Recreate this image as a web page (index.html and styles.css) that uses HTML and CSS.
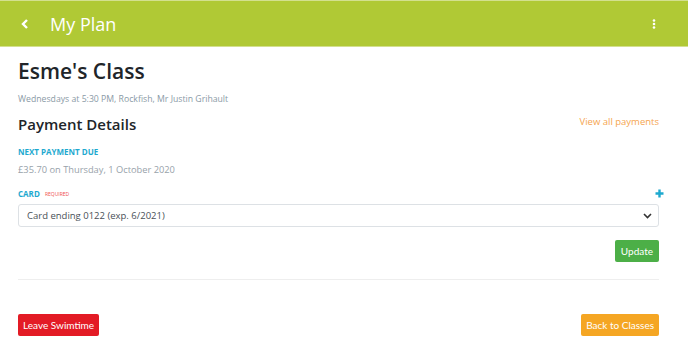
FILE: index.html
```html
<!DOCTYPE html>
<html lang="en">

<head>
    <meta charset="UTF-8">
    <title>My Plan</title>
    <meta name="viewport" content="width=device-width, initial-scale=1.0">
    <link rel="stylesheet" href="styles.css">
</head>

<body>
    <div class="topbar">
        <button class="back-btn" aria-label="Back">
            <svg width="8" height="10" viewBox="0 0 8 10"><path d="M6 1 L2 5 L6 9" fill="none" stroke="#fff" stroke-width="2.4"/></svg>
        </button>
        <span class="topbar-title">My Plan</span>
        <button class="menu-btn" aria-label="Menu">
            <svg width="4" height="10" viewBox="0 0 4 10"><circle cx="2" cy="1.5" r="1.3" fill="#fff"/><circle cx="2" cy="5" r="1.3" fill="#fff"/><circle cx="2" cy="8.5" r="1.3" fill="#fff"/></svg>
        </button>
    </div>

    <div class="content">
        <h1>Esme's Class</h1>
        <p class="class-info">Wednesdays at 5:30 PM, Rockfish, Mr Justin Grihault</p>

        <div class="section-head">
            <h2>Payment Details</h2>
            <a class="link" href="#">View all payments</a>
        </div>

        <div class="label">Next payment due</div>
        <p class="value">£35.70 on Thursday, 1 October 2020</p>

        <div class="card-row">
            <div class="label">Card <span class="required">Required</span></div>
            <svg class="plus" width="9" height="9" viewBox="0 0 9 9"><path d="M4.5 0.5 V8.5 M0.5 4.5 H8.5" stroke="#1ea9cf" stroke-width="2.4"/></svg>
        </div>
        <div class="select">
            <span>Card ending 0122 (exp. 6/2021)</span>
            <svg width="9" height="6" viewBox="0 0 9 6"><path d="M1 1 L4.5 4.5 L8 1" fill="none" stroke="#333" stroke-width="1.6"/></svg>
        </div>

        <div class="update-row">
            <button class="btn btn-green">Update</button>
        </div>

        <hr>

        <div class="actions">
            <button class="btn btn-red">Leave Swimtime</button>
            <button class="btn btn-orange">Back to Classes</button>
        </div>
    </div>
</body>

</html>
```

FILE: styles.css
```css
body {
    margin: 0;
    font-family: "Open Sans", sans-serif;
    background: #fff;
    color: #212529;
}

.topbar {
    display: flex;
    align-items: center;
    height: 45px;
    background: #b0c935;
    border-top: 1px solid #d3e08f;
    border-bottom: 1px solid #d3e08f;
}

.back-btn,
.menu-btn {
    background: none;
    border: none;
    padding: 0;
    display: flex;
    cursor: pointer;
}

.back-btn {
    margin-left: 21px;
}

.topbar-title {
    margin-left: 21px;
    color: #fff;
    font-size: 18px;
    flex: 1;
}

.menu-btn {
    margin-right: 32px;
}

.content {
    padding: 0 29px 0 18px;
}

h1 {
    margin: 9px 0 0;
    font-size: 21px;
    font-weight: 600;
    line-height: 30px;
}

.class-info {
    margin: 7px 0 0;
    font-size: 8.7px;
    color: #8a9aa6;
}

.section-head {
    display: flex;
    justify-content: space-between;
    align-items: flex-start;
    margin-top: 7px;
}

h2 {
    margin: 0;
    font-size: 15px;
    font-weight: 600;
    line-height: 24px;
}

.link {
    color: #f5a54f;
    font-size: 9.5px;
    text-decoration: none;
    margin-top: 3px;
}

.label {
    margin-top: 10px;
    font-size: 8px;
    font-weight: 700;
    color: #1ea9cf;
    text-transform: uppercase;
}

.value {
    margin: 6px 0 0;
    font-size: 9.3px;
    color: #98a2aa;
}

.card-row {
    display: flex;
    justify-content: space-between;
    align-items: flex-end;
    margin-top: 2px;
}

.required {
    font-size: 5px;
    font-weight: 400;
    color: #ef4f4f;
    margin-left: 3px;
    vertical-align: 1px;
}

.plus {
    margin-right: -5px;
    margin-bottom: 1px;
}

.select {
    display: flex;
    justify-content: space-between;
    align-items: center;
    margin-top: 5px;
    height: 21px;
    padding: 0 6px 0 8px;
    border: 1px solid #dde1e5;
    border-radius: 3px;
    font-size: 9.5px;
    color: #495057;
}

.update-row {
    display: flex;
    justify-content: flex-end;
    margin-top: 13px;
}

.btn {
    border: none;
    border-radius: 2px;
    color: #fff;
    font-family: Lato, sans-serif;
    font-size: 10px;
    height: 22px;
    padding: 0 5px;
    cursor: pointer;
}

.btn-green {
    background: #4caf47;
    padding: 0 6px;
}

.btn-red {
    background: #e31b25;
}

.btn-orange {
    background: #f5a623;
}

hr {
    margin: 17px 0 0;
    border: none;
    border-top: 1px solid #eeeeee;
}

.actions {
    display: flex;
    justify-content: space-between;
    margin-top: 34px;
}
```
